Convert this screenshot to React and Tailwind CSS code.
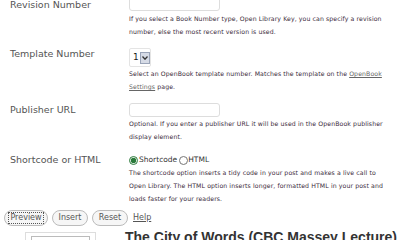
import { useState } from "react"

const desc = "text-[6.2px] leading-[13px] text-[#3b2b3b] tracking-[0.1px]"

function Row({ label, children, labelClass = "" }) {
    return (
        <div className="flex">
            <div className={`w-[129px] shrink-0 pl-[10px] text-[9.5px] leading-[12px] text-[#555] ${labelClass}`}>{label}</div>
            <div className="flex-1">{children}</div>
        </div>
    )
}

export default function App() {
    const [mode, setMode] = useState("shortcode")

    return (
        <div className="w-[400px] h-[240px] overflow-hidden bg-white font-['DejaVu_Sans',sans-serif]">
            <div className="-mt-[4px]">
                {/* Revision */}
                <Row label="Revision Number" labelClass="pt-[3px]">
                    <input className="block w-[91px] h-[15px] border border-[#ddd] rounded-[3px]" />
                    <p className={`${desc} mt-[1px] w-[262px]`}>
                        If you select a Book Number type, Open Library Key, you can specify a revision number, else the most recent version is used.
                    </p>
                </Row>

                {/* Template */}
                <Row label="Template Number" labelClass="pt-[10px]">
                    <div className="mt-[10px] flex items-center w-[22px] h-[19px] border border-[#e4e4e4] rounded-[2px] pl-[3px] gap-[1px]">
                        <span className="text-[9px] text-[#222]">1</span>
                        <span className="flex items-center justify-center w-[10px] h-[12px] bg-[#d6dbe6] border border-[#9aa4b8]">
                            <svg width="6" height="4" viewBox="0 0 6 4"><path d="M0.5 0.5 L3 3.2 L5.5 0.5" fill="none" stroke="#333" strokeWidth="1.3" /></svg>
                        </span>
                    </div>
                    <p className={`${desc} w-[262px]`}>
                        Select an OpenBook template number. Matches the template on the <a className="underline text-[#666]">OpenBook</a> <a className="underline text-[#666]">Settings</a> page.
                    </p>
                </Row>

                {/* Publisher */}
                <Row label="Publisher URL" labelClass="pt-[11px]">
                    <input className="block mt-[10px] w-[91px] h-[14px] border border-[#ddd] rounded-[3px]" />
                    <p className={`${desc} w-[262px]`}>
                        Optional. If you enter a publisher URL it will be used in the OpenBook publisher display element.
                    </p>
                </Row>

                {/* Shortcode */}
                <Row label="Shortcode or HTML" labelClass="pt-[11px]">
                    <div className="mt-[11px] flex items-center text-[7.5px] text-[#333] h-[12px]">
                        <label className="flex items-center">
                            <input type="radio" name="mode" checked={mode === "shortcode"} onChange={() => setMode("shortcode")} className="m-0 mr-[1px] w-[9px] h-[9px] accent-[#2a7a3a]" />
                            Shortcode
                        </label>
                        <label className="flex items-center ml-[2px]">
                            <input type="radio" name="mode" checked={mode === "html"} onChange={() => setMode("html")} className="m-0 w-[9px] h-[9px]" />
                            HTML
                        </label>
                    </div>
                    <p className={`${desc} w-[262px]`}>
                        The shortcode option inserts a tidy code in your post and makes a live call to Open Library. The HTML option inserts longer, formatted HTML in your post and loads faster for your readers.
                    </p>
                </Row>
            </div>

            {/* Buttons */}
            <div className="flex items-center gap-[4px] pl-[4px] mt-[5px] text-[8px] text-[#555]">
                <button className="w-[44px] h-[16px] flex items-center justify-center rounded-full border border-[#bbb] bg-[#f6f6f6]">
                    <span className="border border-dotted border-[#555] px-[1px] leading-[10px]">Preview</span>
                </button>
                <button className="w-[36px] h-[16px] rounded-full border border-[#bbb] bg-[#f6f6f6]">Insert</button>
                <button className="w-[36px] h-[16px] rounded-full border border-[#bbb] bg-[#f6f6f6]">Reset</button>
                <a className="underline text-[#555] ml-[1px]">Help</a>
            </div>

            {/* Book preview */}
            <div className="flex mt-[6px]">
                <div className="ml-[25px] w-[71px] h-[20px] border border-[#ddd] px-[5px] pt-[3px]">
                    <div className="h-[4px] border-t border-x border-[#bbb]"></div>
                </div>
                <h2 className="ml-[29px] -mt-[4px] font-['Liberation_Sans',sans-serif] text-[14px] font-bold text-[#333] leading-[18px]">The City of Words (CBC Massey Lecture)</h2>
            </div>
        </div>
    )
}
